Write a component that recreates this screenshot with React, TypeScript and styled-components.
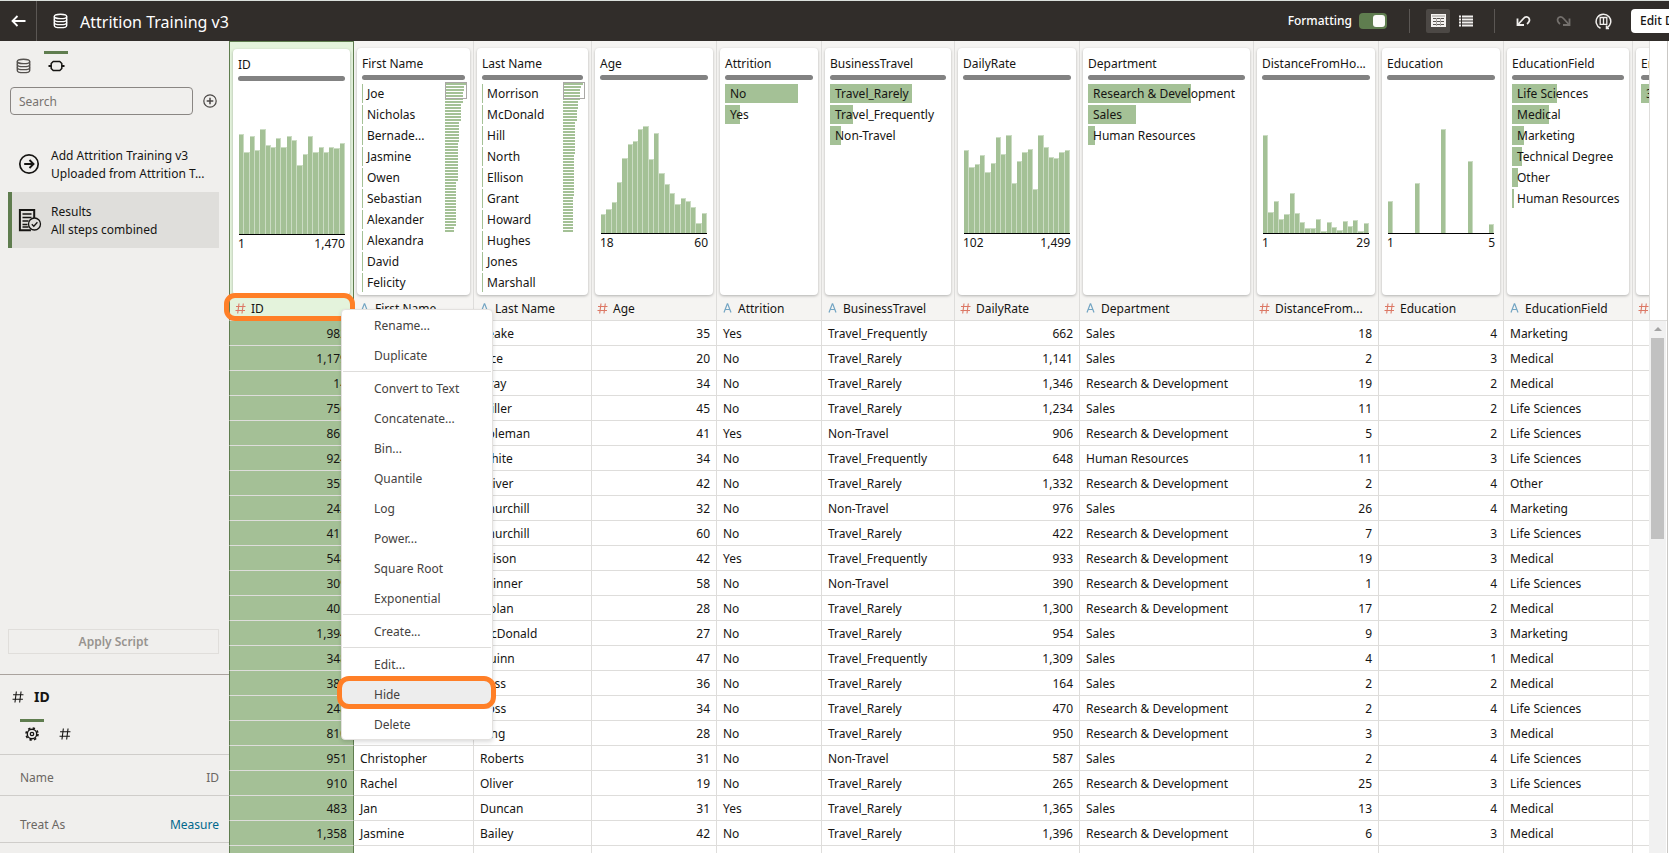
import React from 'react';
import styled, { createGlobalStyle, css } from 'styled-components';

const GREEN = '#5f7d4f';
const BAR = '#a4c196';
const LINE = '#dedddb';
const ORANGE = '#ff7f27';

const GlobalStyle = createGlobalStyle`
  *, *::before, *::after { box-sizing: border-box; }
  body {
    margin: 0;
    font: 12px/18px "Noto Sans", "Open Sans", sans-serif;
    color: #161513;
    background: #fff;
    overflow: hidden;
  }
  button, input { font: inherit; color: inherit; }
  button { margin: 0; padding: 0; border: 0; background: none; cursor: pointer; }
  svg { display: block; }
`;

/* ---------- shell ---------- */

const Shell = styled.div`
  display: flex;
  flex-direction: column;
  height: 100vh;
  border-top: 1px solid #dbe0dc;
`;

const TopBar = styled.header`
  flex: none;
  display: flex;
  align-items: center;
  height: 40px;
  color: #fff;
  background: #312d2a;
  overflow: hidden;
`;

const BackButton = styled.button`
  display: flex;
  align-items: center;
  justify-content: center;
  width: 37px;
  height: 40px;
  border-right: 1px solid #5b5754;
`;

const TitleBlock = styled.div`
  flex: 1;
  display: flex;
  align-items: center;
  gap: 12px;
  padding-left: 16px;
`;

const Title = styled.h1`
  margin: 0;
  padding-top: 1px;
  font-size: 16px;
  font-weight: 400;
  line-height: 24px;
`;

const Tools = styled.div`
  flex: none;
  display: flex;
  align-items: center;
`;

const ToggleLabel = styled.label`
  display: flex;
  align-items: center;
  gap: 7px;
  font-weight: 500;
`;

const Toggle = styled.input`
  appearance: none;
  display: flex;
  justify-content: flex-end;
  width: 28px;
  height: 16px;
  margin: 0;
  padding: 2px;
  border-radius: 4px;
  background: ${GREEN};
  &::after {
    content: '';
    width: 12px;
    height: 12px;
    border-radius: 3px;
    background: #fcfbfa;
  }
`;

const Divider = styled.span`
  width: 1px;
  height: 24px;
  background: #5b5754;
`;

const ToolGroup = styled.div<{ $gap: number; $left: number; $right: number }>`
  display: flex;
  gap: ${(p) => p.$gap}px;
  padding: 0 ${(p) => p.$right}px 0 ${(p) => p.$left}px;
`;

const ToolButton = styled.button<{ $active?: boolean; $dim?: boolean }>`
  display: flex;
  align-items: center;
  justify-content: center;
  width: 24px;
  height: 24px;
  border-radius: 2px;
  color: ${(p) => (p.$dim ? '#74706d' : '#f1efed')};
  background: ${(p) => (p.$active ? '#4c4845' : 'transparent')};
`;

const EditSlot = styled.div`
  width: 38px;
  overflow: hidden;
`;

const EditButton = styled.button`
  height: 24px;
  padding: 0 9px;
  border-radius: 4px;
  color: #161513;
  background: #fff;
  font-weight: 500;
  white-space: nowrap;
`;

const Body = styled.div`
  flex: 1;
  min-height: 0;
  display: flex;
`;

/* ---------- sidebar ---------- */

const Sidebar = styled.aside`
  flex: none;
  display: flex;
  flex-direction: column;
  width: 229px;
  background: #f0efed;
`;

const TabStrip = styled.nav`
  display: flex;
  gap: 9px;
  padding: 10px 0 0 11px;
`;

const Tab = styled.button<{ $active?: boolean; $color?: string }>`
  display: flex;
  align-items: center;
  justify-content: center;
  width: 24px;
  height: 27px;
  color: ${(p) => p.$color || '#161513'};
  border-top: 3px solid ${(p) => (p.$active ? GREEN : 'transparent')};
`;

const SearchRow = styled.div`
  display: flex;
  align-items: center;
  gap: 10px;
  padding: 9px 0 0 10px;
`;

const SearchInput = styled.input`
  width: 183px;
  height: 28px;
  padding: 0 8px;
  border: 1px solid #8a8683;
  border-radius: 4px;
  background: transparent;
  &::placeholder { color: #77736f; opacity: 1; }
`;

const Steps = styled.ul`
  flex: 1;
  margin: 0;
  padding: 21px 10px 0 8px;
  list-style: none;
`;

const Step = styled.li<{ $active?: boolean }>`
  display: flex;
  align-items: center;
  height: 56px;
  padding-left: 6px;
  border-left: 4px solid ${(p) => (p.$active ? GREEN : 'transparent')};
  background: ${(p) => (p.$active ? '#dfdedb' : 'transparent')};
`;

const StepIcon = styled.span`
  width: 33px;
`;

const StepText = styled.div`
  padding-top: 2px;
  white-space: nowrap;
`;

const ApplyButton = styled.button`
  align-self: stretch;
  height: 25px;
  margin: 0 10px 20px 8px;
  border: 1px solid #e0dedb;
  color: #97938f;
  font-weight: 600;
`;

const Properties = styled.section`
  height: 179px;
  border-top: 1px solid #aaa39e;
`;

const PropTitle = styled.h2`
  display: flex;
  align-items: center;
  gap: 10px;
  margin: 0;
  padding: 12px 0 0 12px;
  font-size: 14px;
  font-weight: 700;
  line-height: 20px;
`;

const PropTabs = styled.div`
  display: flex;
  gap: 9px;
  padding: 12px 0 8px 20px;
  border-bottom: 1px solid #cfcdca;
`;

const PropRow = styled.div<{ $height: number }>`
  display: flex;
  align-items: flex-end;
  justify-content: space-between;
  height: ${(p) => p.$height}px;
  padding: 0 10px 8px 20px;
  border-bottom: 1px solid #cfcdca;
  color: #6b6763;
`;

const PropLink = styled.a`
  color: #00688c;
  text-decoration: none;
`;

/* ---------- data area ---------- */

const Main = styled.main`
  flex: 1;
  min-width: 0;
  position: relative;
  display: flex;
  padding-right: 1px;
`;

const TableClip = styled.div`
  flex: 1;
  min-width: 0;
  overflow: hidden;
`;

const Grid = styled.table`
  table-layout: fixed;
  width: 1529px;
  border-spacing: 0;
`;

const selectedEdges = css`
  border-left: 1px solid ${GREEN};
  border-right: 1px solid ${GREEN};
`;

const CardCell = styled.th<{ $selected?: boolean }>`
  height: 255px;
  padding: 7px 3px 0;
  vertical-align: top;
  text-align: left;
  font-weight: 400;
  border-right: 1px solid ${LINE};
  background: #f5f4f2;
  ${(p) =>
    p.$selected &&
    css`
      ${selectedEdges}
      border-top: 1px solid ${GREEN};
      background: #e4f3dc;
    `}
`;

const Card = styled.article<{ $height: number }>`
  position: relative;
  height: ${(p) => p.$height}px;
  padding: 7px 5px 0;
  border-radius: 4px;
  background: #fff;
  box-shadow: 0 1px 3px rgba(0, 0, 0, 0.28);
`;

const CardTitle = styled.h3`
  margin: 0;
  font-size: 12px;
  font-weight: 400;
  line-height: 18px;
  white-space: nowrap;
`;

const QualityBar = styled.div`
  height: 5px;
  margin-top: 2px;
  border-radius: 3px;
  background: #828282;
`;

const CategoryList = styled.ul`
  display: grid;
  gap: 2px;
  margin: 4px 0 0;
  padding: 0;
  list-style: none;
`;

const Category = styled.li<{ $bar: number }>`
  height: 19px;
  padding-left: 5px;
  line-height: 20px;
  white-space: nowrap;
  background: linear-gradient(${BAR}, ${BAR}) no-repeat 0 0 / ${(p) => p.$bar}px 100%;
`;

const MiniMap = styled.svg`
  position: absolute;
  top: 34px;
  right: 3px;
`;

const HistogramBox = styled.div`
  padding: 46px 1px 0;
`;

const Range = styled.div`
  display: flex;
  justify-content: space-between;
  line-height: 18px;
`;

const HeadCell = styled.th<{ $selected?: boolean }>`
  height: 25px;
  padding: 0 0 0 5px;
  overflow: hidden;
  text-align: left;
  font-weight: 400;
  white-space: nowrap;
  border-right: 1px solid ${LINE};
  border-bottom: 1px solid ${LINE};
  background: #f5f4f2;
  ${(p) =>
    p.$selected &&
    css`
      ${selectedEdges}
      background: #e4f3dc;
    `}
`;

const HeadLabel = styled.span`
  display: flex;
  align-items: center;
  gap: 5px;
`;

const HeadText = styled.span`
  padding-top: 2px;
`;

const TypeMark = styled.span<{ $number?: boolean }>`
  display: flex;
  justify-content: center;
  width: 11px;
  color: ${(p) => (p.$number ? '#dc7865' : '#73a5c3')};
`;

const DataCell = styled.td<{ $number?: boolean; $selected?: boolean }>`
  height: 25px;
  padding: 2px 6px 0;
  line-height: 22px;
  white-space: nowrap;
  text-align: ${(p) => (p.$number ? 'right' : 'left')};
  border-right: 1px solid ${LINE};
  border-bottom: 1px solid ${LINE};
  ${(p) =>
    p.$selected &&
    css`
      ${selectedEdges}
      background: #a4c096;
    `}
`;

const Rail = styled.div`
  flex: none;
  display: flex;
  flex-direction: column;
  width: 19px;
  border-right: 1px solid #c9c7c4;
`;

const RailGap = styled.div`
  height: 280px;
  border-left: 1px solid ${LINE};
  border-bottom: 1px solid ${LINE};
`;

const RailTrack = styled.div`
  flex: 1;
  width: 17px;
  padding: 6px 2px 0;
  background: #f1f1f1;
`;

const RailThumb = styled.div`
  height: 201px;
  margin-top: 7px;
  background: #c1c1c1;
`;

const RailArrow = styled.div`
  width: 8px;
  margin: 0 auto;
  border: 4px solid transparent;
  border-top: 0;
  border-bottom-color: #a3a3a3;
`;

const Highlight = styled.div`
  position: absolute;
  top: 252px;
  left: -5px;
  width: 131px;
  height: 28px;
  border: 5px solid ${ORANGE};
  border-radius: 11px;
  pointer-events: none;
`;

/* ---------- context menu ---------- */

const Menu = styled.ul`
  position: absolute;
  top: 268px;
  left: 112px;
  width: 152px;
  margin: 0;
  padding: 0;
  list-style: none;
  border: 1px solid #e3e1df;
  border-radius: 4px;
  background: #fff;
  box-shadow: 0 2px 4px rgba(0, 0, 0, 0.14);
`;

const MenuItem = styled.li<{ $hover?: boolean }>`
  position: relative;
  background: ${(p) => (p.$hover ? '#ededed' : 'transparent')};
`;

const MenuButton = styled.button`
  display: block;
  width: 100%;
  height: 30px;
  padding: 2px 0 0 32px;
  text-align: left;
  color: #454240;
`;

const MenuRule = styled.li`
  height: 3px;
  margin: 0 1px;
  border: 0 solid #fff;
  border-width: 1px 0;
  background: ${LINE};
`;

const MenuHighlight = styled.span`
  position: absolute;
  inset: -3px -4px 0 -5px;
  border: 5px solid ${ORANGE};
  border-radius: 12px;
  pointer-events: none;
`;

/* ---------- icons ---------- */

const DatabaseIcon = () => (
  <svg width="15" height="16" viewBox="0 0 15 16" fill="none" stroke="currentColor" strokeWidth="1.4">
    <ellipse cx="7.5" cy="3.4" rx="6.2" ry="2.2" />
    <path d="M1.3 3.4v9c0 1.3 2.7 2.2 6.2 2.200s6.200-.9 6.200-2.200v-9" />
    <path d="M1.300 6.400c0 1.300 2.700 2.200 6.200 2.200s6.200-.9 6.200-2.200M1.300 9.400c0 1.300 2.700 2.200 6.200 2.200s6.200-.9 6.200-2.200" />
  </svg>
);

const BackIcon = () => (
  <svg width="15" height="12" viewBox="0 0 15 12" fill="none" stroke="currentColor" strokeWidth="1.8">
    <path d="M14.5 6H1.5M6.500 1L1.500 6l5 5" />
  </svg>
);

const NodeIcon = () => (
  <svg width="17" height="12" viewBox="0 0 17 12" fill="none" stroke="currentColor" strokeWidth="1.5">
    <path d="M5.200 1.500h6.600l2 2v5l-2 2H5.200l-2-2v-5z" strokeLinejoin="round" />
    <path d="M0.500 6h2.500M14 6h2.500" strokeWidth="2" />
  </svg>
);

const PlusCircleIcon = () => (
  <svg width="14" height="14" viewBox="0 0 14 14" fill="none" stroke="#4a4745" strokeWidth="1.2">
    <circle cx="7" cy="7" r="6.2" />
    <path d="M7 3.700v6.600M3.700 7h6.600" strokeWidth="1.5" />
  </svg>
);

const ArrowCircleIcon = () => (
  <svg width="22" height="22" viewBox="0 0 22 22" fill="none" stroke="currentColor" strokeWidth="1.7">
    <circle cx="11" cy="11" r="9.2" />
    <path d="M6.200 11h9M11.500 7l4 4-4 4" strokeWidth="1.9" />
  </svg>
);

const ResultsIcon = () => (
  <svg width="24" height="24" viewBox="0 0 24 24" fill="none" stroke="currentColor">
    <path d="M16.200 10V1.900H1.900v20.300h11" strokeWidth="2" />
    <path d="M4.500 6h9M4.500 9.500h9M4.500 13h6M4.500 16.500h5M4.500 19h6" strokeWidth="1.7" />
    <circle cx="16.5" cy="16" r="6" fill="#dfdedb" strokeWidth="1.3" />
    <path d="M13.800 16.200l2 2 3.600-4" strokeWidth="1.3" />
  </svg>
);

const HashIcon = ({ size = 11, width = 1.1 }: { size?: number; width?: number }) => (
  <svg width={size} height={size} viewBox="0 0 11 11" fill="none" stroke="currentColor" strokeWidth={width}>
    <path d="M4 0.500L2.700 10.500M8.300 0.500L7 10.500M1 3.500h9.500M0.500 7.500h9.500" />
  </svg>
);

const LetterIcon = () => (
  <svg width="9" height="10" viewBox="0 0 9 10" fill="none" stroke="currentColor" strokeWidth="1.2">
    <path d="M1 9.500L4.300 0.800h0.400L8 9.500M2.200 6.500h4.600" />
  </svg>
);

const GearIcon = () => (
  <svg width="14" height="14" viewBox="0 0 14 14" fill="none" stroke="currentColor">
    <circle cx="7" cy="7" r="4.7" strokeWidth="1.4" />
    <circle cx="7" cy="7" r="6" strokeWidth="1.6" strokeDasharray="2.360 2.352" />
    <circle cx="7" cy="7" r="1.7" strokeWidth="1.3" />
  </svg>
);

const TableIcon = () => (
  <svg width="15" height="14" viewBox="0 0 15 14" shapeRendering="crispEdges">
    <rect width="15" height="13" fill="#f4f2f0" />
    <rect x="1" y="1" width="13" height="2" fill="#c9c6c3" />
    <path d="M2 4h3v1H2zM6 4h3v1H6zM10 4h3v1h-3zM2 7h3v1H2zM6 7h3v1H6zM10 7h3v1h-3zM2 10h3v1H2zM6 10h3v1H6zM10 10h3v1h-3z" fill="#5a5653" />
    <path d="M5 4h1v8H5zM9 4h1v8H9z" fill="#aaa6a3" />
  </svg>
);

const ListIcon = () => (
  <svg width="14" height="12" viewBox="0 0 14 12" fill="none" stroke="currentColor" strokeWidth="2">
    <path d="M0 1.500h2M3 1.500h11M0 4.500h2M3 4.500h11M0 7.500h2M3 7.500h11M0 10.500h2M3 10.500h11" />
  </svg>
);

const UndoIcon = () => (
  <svg width="15" height="12" viewBox="0 0 15 12" fill="none" stroke="currentColor" strokeWidth="1.8">
    <path d="M1.500 3.500v6.500h6.500" />
    <path d="M2 9.500L7.500 3.500c2-2.200 4.200-2 5.300-.500 1.300 1.800.600 4.300-1.800 6" />
  </svg>
);

const RedoIcon = () => (
  <svg width="15" height="12" viewBox="0 0 15 12" fill="none" stroke="currentColor" strokeWidth="1.8">
    <path d="M13.500 3.500v6.500H7" />
    <path d="M13 9.500L7.500 3.500c-2-2.200-4.200-2-5.300-.500C0.900 4.800 1.600 7.300 4 9" />
  </svg>
);

const InsightsIcon = () => (
  <svg width="17" height="17" viewBox="0 0 17 17" fill="none" stroke="currentColor">
    <path d="M5.500 15.200A7.300 7.300 0 1 1 11.800 15" strokeWidth="1.5" />
    <path d="M8.500 4.200v7.600M5.200 4.500h6.600v6.800H5.200z" strokeWidth="1.3" />
    <path d="M11.500 12.500v3h2.500" strokeWidth="1.5" />
  </svg>
);

/* ---------- data ---------- */

type Histo = { kind: 'histogram'; bars: number[]; min: string; max: string };
type Cats = { kind: 'categories'; items: [string, number][]; map?: [number, number][] };
type Column = {
  key: string;
  label: string;
  head: string;
  width: number;
  number?: boolean;
  profile: Histo | Cats;
};

const sparse = (entries: Record<number, number>) =>
  Array.from({ length: 20 }, (_, i) => entries[i] || 0);

const names = (list: string[]): [string, number][] => list.map((n) => [n, 1]);

const columns: Column[] = [
  {
    key: 'id', label: 'ID', head: 'ID', width: 125, number: true,
    profile: { kind: 'histogram', min: '1', max: '1,470', bars: [100, 82, 98, 84, 105, 89, 87, 96, 87, 98, 94, 69, 80, 98, 82, 87, 82, 87, 86, 91] },
  },
  {
    key: 'first', label: 'First Name', head: 'First Name', width: 120,
    profile: {
      kind: 'categories',
      items: names(['Joe', 'Nicholas', 'Bernade...', 'Jasmine', 'Owen', 'Sebastian', 'Alexander', 'Alexandra', 'David', 'Felicity']),
      map: [[1, 21], [2, 19], [4, 18], [6, 16], [7, 14], [13, 13], [15, 11], [2, 9]],
    },
  },
  {
    key: 'last', label: 'Last Name', head: 'Last Name', width: 118,
    profile: {
      kind: 'categories',
      items: names(['Morrison', 'McDonald', 'Hill', 'North', 'Ellison', 'Grant', 'Howard', 'Hughes', 'Jones', 'Marshall']),
      map: [[1, 20], [1, 18], [4, 17], [3, 15], [4, 14], [11, 12], [14, 11], [12, 10]],
    },
  },
  {
    key: 'age', label: 'Age', head: 'Age', width: 125, number: true,
    profile: { kind: 'histogram', min: '18', max: '60', bars: [19, 24, 31, 51, 75, 89, 92, 104, 107, 74, 100, 60, 49, 40, 29, 35, 32, 26, 10, 20] },
  },
  {
    key: 'attrition', label: 'Attrition', head: 'Attrition', width: 105,
    profile: { kind: 'categories', items: [['No', 73], ['Yes', 15]] },
  },
  {
    key: 'travel', label: 'BusinessTravel', head: 'BusinessTravel', width: 133,
    profile: { kind: 'categories', items: [['Travel_Rarely', 82], ['Travel_Frequently', 23], ['Non-Travel', 11]] },
  },
  {
    key: 'rate', label: 'DailyRate', head: 'DailyRate', width: 125, number: true,
    profile: { kind: 'histogram', min: '102', max: '1,499', bars: [83, 66, 69, 78, 61, 70, 96, 79, 98, 50, 72, 81, 84, 44, 98, 86, 76, 75, 81, 83] },
  },
  {
    key: 'department', label: 'Department', head: 'Department', width: 174,
    profile: { kind: 'categories', items: [['Research & Development', 103], ['Sales', 48], ['Human Resources', 7]] },
  },
  {
    key: 'distance', label: 'DistanceFromHo...', head: 'DistanceFrom...', width: 125, number: true,
    profile: { kind: 'histogram', min: '1', max: '29', bars: [98, 21, 32, 14, 19, 40, 20, 11, 5, 5, 14, 2, 11, 6, 3, 12, 7, 13, 2, 10] },
  },
  {
    key: 'education', label: 'Education', head: 'Education', width: 125, number: true,
    profile: { kind: 'histogram', min: '1', max: '5', bars: sparse({ 0: 32, 5: 50, 10: 104, 15: 72, 19: 9 }) },
  },
  {
    key: 'field', label: 'EducationField', head: 'EducationField', width: 129,
    profile: {
      kind: 'categories',
      items: [['Life Sciences', 45], ['Medical', 37], ['Marketing', 12], ['Technical Degree', 10], ['Other', 6], ['Human Resources', 2]],
    },
  },
  {
    key: 'environment', label: 'Environment...', head: 'Environment...', width: 125, number: true,
    profile: { kind: 'categories', items: [['3', 40]] },
  },
];

const RD = 'Research & Development';
const rows: string[][] = [
  ['982', '', 'Peake', '35', 'Yes', 'Travel_Frequently', '662', 'Sales', '18', '4', 'Marketing'],
  ['1,179', '', 'Rice', '20', 'No', 'Travel_Rarely', '1,141', 'Sales', '2', '3', 'Medical'],
  ['14', '', 'Gray', '34', 'No', 'Travel_Rarely', '1,346', RD, '19', '2', 'Medical'],
  ['756', '', 'Miller', '45', 'No', 'Travel_Rarely', '1,234', 'Sales', '11', '2', 'Life Sciences'],
  ['861', '', 'Coleman', '41', 'Yes', 'Non-Travel', '906', RD, '5', '2', 'Life Sciences'],
  ['924', '', 'White', '34', 'No', 'Travel_Frequently', '648', 'Human Resources', '11', '3', 'Life Sciences'],
  ['357', '', 'Oliver', '42', 'No', 'Travel_Rarely', '1,332', RD, '2', '4', 'Other'],
  ['242', '', 'Churchill', '32', 'No', 'Non-Travel', '976', 'Sales', '26', '4', 'Marketing'],
  ['411', '', 'Churchill', '60', 'No', 'Travel_Rarely', '422', RD, '7', '3', 'Life Sciences'],
  ['548', '', 'Ellison', '42', 'Yes', 'Travel_Frequently', '933', RD, '19', '3', 'Medical'],
  ['309', '', 'Skinner', '58', 'No', 'Non-Travel', '390', RD, '1', '4', 'Life Sciences'],
  ['401', '', 'Nolan', '28', 'No', 'Travel_Rarely', '1,300', RD, '17', '2', 'Medical'],
  ['1,394', '', 'McDonald', '27', 'No', 'Travel_Rarely', '954', 'Sales', '9', '3', 'Marketing'],
  ['348', '', 'Quinn', '47', 'No', 'Travel_Frequently', '1,309', 'Sales', '4', '1', 'Medical'],
  ['387', '', 'Bass', '36', 'No', 'Travel_Rarely', '164', 'Sales', '2', '2', 'Medical'],
  ['248', '', 'Ross', '34', 'No', 'Travel_Rarely', '470', RD, '2', '4', 'Life Sciences'],
  ['810', '', 'King', '28', 'No', 'Travel_Rarely', '950', RD, '3', '3', 'Medical'],
  ['951', 'Christopher', 'Roberts', '31', 'No', 'Non-Travel', '587', 'Sales', '2', '4', 'Life Sciences'],
  ['910', 'Rachel', 'Oliver', '19', 'No', 'Travel_Rarely', '265', RD, '25', '3', 'Life Sciences'],
  ['483', 'Jan', 'Duncan', '31', 'Yes', 'Travel_Rarely', '1,365', 'Sales', '13', '4', 'Medical'],
  ['1,358', 'Jasmine', 'Bailey', '42', 'No', 'Travel_Rarely', '1,396', RD, '6', '3', 'Medical'],
  [],
];

const menuGroups: string[][] = [
  ['Rename...', 'Duplicate'],
  ['Convert to Text', 'Concatenate...', 'Bin...', 'Quantile', 'Log', 'Power...', 'Square Root', 'Exponential'],
  ['Create...'],
  ['Edit...', 'Hide', 'Delete'],
];

/* ---------- parts ---------- */

const Histogram = ({ bars, min, max }: Histo) => {
  const base = 107;
  const edge = (i: number) => Math.round((i * 106) / bars.length);
  return (
    <>
      <HistogramBox>
        <svg width="106" height="108" shapeRendering="crispEdges" aria-hidden="true">
          {bars.map((h, i) =>
            h === 0 ? null : (
              <g key={i}>
                <rect x={edge(i)} y={base - h} width={edge(i + 1) - edge(i)} height={h} fill="#cbdcc3" />
                <rect x={edge(i)} y={base - h + 1} width={edge(i + 1) - edge(i) - 1} height={h - 1} fill={BAR} />
              </g>
            ),
          )}
          <rect x="0" y={base} width="106" height="1" fill="#000" />
        </svg>
      </HistogramBox>
      <Range>
        <span>{min}</span>
        <span>{max}</span>
      </Range>
    </>
  );
};

const Overview = ({ runs }: { runs: [number, number][] }) => {
  const widths = runs.flatMap(([count, w]) => Array<number>(count).fill(w));
  return (
    <MiniMap width="22" height="152" shapeRendering="crispEdges" aria-hidden="true">
      {widths.map((w, i) => (
        <rect key={i} x="0" y={1 + i * 3} width={w} height="2" fill={BAR} />
      ))}
      <rect x="0.5" y="0.5" width="21" height="16" fill="none" stroke="#aaa8a6" />
    </MiniMap>
  );
};

const ProfileCard = ({ column, selected }: { column: Column; selected?: boolean }) => {
  const { profile } = column;
  return (
    <Card $height={selected ? 246 : 247}>
      <CardTitle>{column.label}</CardTitle>
      <QualityBar />
      {profile.kind === 'histogram' ? (
        <Histogram {...profile} />
      ) : (
        <>
          <CategoryList>
            {profile.items.map(([name, bar]) => (
              <Category key={name} $bar={bar}>{name}</Category>
            ))}
          </CategoryList>
          {profile.map && <Overview runs={profile.map} />}
        </>
      )}
    </Card>
  );
};

const ColumnMenu = () => (
  <Menu role="menu">
    {menuGroups.map((group, g) => (
      <React.Fragment key={g}>
        {g > 0 && <MenuRule role="separator" />}
        {group.map((item) => (
          <MenuItem key={item} role="none" $hover={item === 'Hide'}>
            <MenuButton type="button" role="menuitem">{item}</MenuButton>
            {item === 'Hide' && <MenuHighlight />}
          </MenuItem>
        ))}
      </React.Fragment>
    ))}
  </Menu>
);

const Header = () => (
  <TopBar>
    <BackButton type="button" aria-label="Back"><BackIcon /></BackButton>
    <TitleBlock>
      <DatabaseIcon />
      <Title>Attrition Training v3</Title>
    </TitleBlock>
    <Tools>
      <ToggleLabel htmlFor="formatting">
        Formatting
        <Toggle id="formatting" type="checkbox" role="switch" defaultChecked />
      </ToggleLabel>
      <ToolGroup $gap={0} $left={22} $right={0}><Divider /></ToolGroup>
      <ToolGroup $gap={4} $left={16} $right={16}>
        <ToolButton type="button" $active aria-label="Table view"><TableIcon /></ToolButton>
        <ToolButton type="button" aria-label="List view"><ListIcon /></ToolButton>
      </ToolGroup>
      <Divider />
      <ToolGroup $gap={16} $left={16} $right={16}>
        <ToolButton type="button" aria-label="Undo"><UndoIcon /></ToolButton>
        <ToolButton type="button" $dim aria-label="Redo"><RedoIcon /></ToolButton>
        <ToolButton type="button" aria-label="Insights"><InsightsIcon /></ToolButton>
      </ToolGroup>
      <EditSlot><EditButton type="button">Edit Definition</EditButton></EditSlot>
    </Tools>
  </TopBar>
);

const ScriptPanel = () => (
  <Sidebar>
    <TabStrip>
      <Tab type="button" $color="#55524f" aria-label="Data"><DatabaseIcon /></Tab>
      <Tab type="button" $active aria-label="Steps"><NodeIcon /></Tab>
    </TabStrip>
    <SearchRow>
      <SearchInput type="search" placeholder="Search" aria-label="Search" />
      <button type="button" aria-label="Add step"><PlusCircleIcon /></button>
    </SearchRow>
    <Steps>
      <Step>
        <StepIcon><ArrowCircleIcon /></StepIcon>
        <StepText>
          <div>Add Attrition Training v3</div>
          <div>Uploaded from Attrition T...</div>
        </StepText>
      </Step>
      <Step $active>
        <StepIcon><ResultsIcon /></StepIcon>
        <StepText>
          <div>Results</div>
          <div>All steps combined</div>
        </StepText>
      </Step>
    </Steps>
    <ApplyButton type="button">Apply Script</ApplyButton>
    <Properties>
      <PropTitle><HashIcon size={12} width={1} />ID</PropTitle>
      <PropTabs>
        <Tab type="button" $active aria-label="General"><GearIcon /></Tab>
        <Tab type="button" aria-label="Number format"><HashIcon size={12} width={1} /></Tab>
      </PropTabs>
      <PropRow $height={41}><span>Name</span><span>ID</span></PropRow>
      <PropRow $height={47}><span>Treat As</span><PropLink href="#treat-as">Measure</PropLink></PropRow>
    </Properties>
  </Sidebar>
);

export default function App() {
  return (
    <>
      <GlobalStyle />
      <Shell>
        <Header />
        <Body>
          <ScriptPanel />
          <Main>
            <TableClip>
              <Grid>
                <colgroup>
                  {columns.map((c) => <col key={c.key} width={c.width} />)}
                </colgroup>
                <thead>
                  <tr>
                    {columns.map((c, i) => (
                      <CardCell key={c.key} $selected={i === 0}>
                        <ProfileCard column={c} selected={i === 0} />
                      </CardCell>
                    ))}
                  </tr>
                  <tr>
                    {columns.map((c, i) => (
                      <HeadCell key={c.key} scope="col" $selected={i === 0}>
                        <HeadLabel>
                          <TypeMark $number={c.number}>{c.number ? <HashIcon /> : <LetterIcon />}</TypeMark>
                          <HeadText>{c.head}</HeadText>
                        </HeadLabel>
                      </HeadCell>
                    ))}
                  </tr>
                </thead>
                <tbody>
                  {rows.map((row, r) => (
                    <tr key={r}>
                      {columns.map((c, i) => (
                        <DataCell key={c.key} $number={c.number} $selected={i === 0}>{row[i]}</DataCell>
                      ))}
                    </tr>
                  ))}
                </tbody>
              </Grid>
            </TableClip>
            <Rail aria-hidden="true">
              <RailGap />
              <RailTrack>
                <RailArrow />
                <RailThumb />
              </RailTrack>
            </Rail>
            <Highlight />
            <ColumnMenu />
          </Main>
        </Body>
      </Shell>
    </>
  );
}
